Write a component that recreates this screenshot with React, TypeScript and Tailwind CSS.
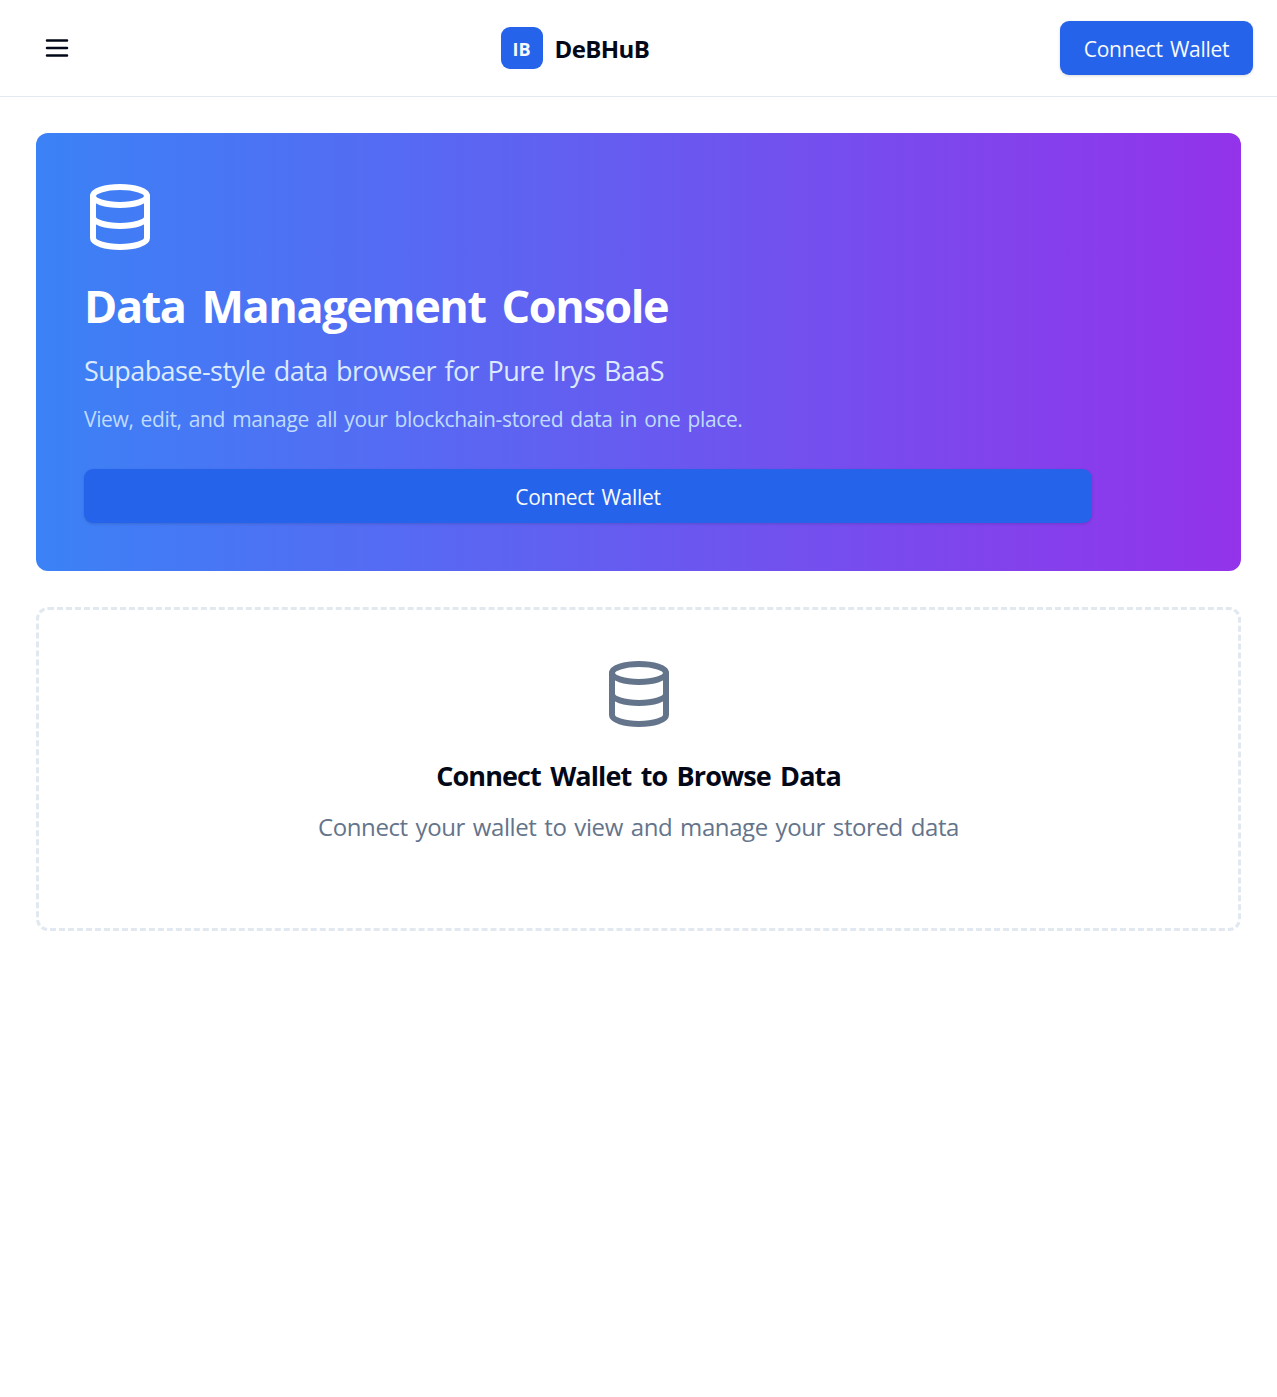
import { Database } from "lucide-react";

function MenuIcon() {
  return (
    <svg width="30" height="30" viewBox="0 0 24 24" fill="none" stroke="currentColor" strokeWidth="2" strokeLinecap="round">
      <path d="M4 6h16M4 12h16M4 18h16" />
    </svg>
  );
}

function ConnectButton({ className }: { className: string }) {
  return (
    <button
      className={
        "flex h-[54px] items-center justify-center rounded-[9px] bg-[#2563eb] text-[21px] text-slate-50 shadow-[0_1px_3px_rgba(0,0,0,0.15)] " +
        className
      }
    >
      <span className="pt-[3px] tracking-[-0.28px] whitespace-nowrap [word-spacing:2px]">Connect Wallet</span>
    </button>
  );
}

export default function App() {
  return (
    <div className="min-h-screen bg-white font-['Open_Sans','Noto_Sans',sans-serif] text-[#020817]">
      <header className="flex h-[97px] items-center justify-between border-b border-[#e2e8f0] px-6">
        <button className="flex h-[54px] w-[66px] items-center justify-center">
          <MenuIcon />
        </button>
        <div className="flex items-center gap-3">
          <div className="flex size-[42px] items-center justify-center rounded-[9px] bg-[#2563eb] pt-0.5 text-[18px] font-bold text-slate-50">
            IB
          </div>
          <span className="w-[95px] pt-0.5 text-[24px] font-bold tracking-[-0.6px] whitespace-nowrap">DeBHuB</span>
        </div>
        <ConnectButton className="w-[193px]" />
      </header>
      <main className="px-9 pt-9">
        <section className="h-[438px] rounded-xl bg-linear-to-r/srgb from-[#3b82f6] to-[#9333ea] p-12 text-white">
          <Database size={72} strokeWidth={2} />
          <h1 className="mt-6 pb-0.5 text-[45px] leading-[58px] font-bold tracking-[-1.4px] whitespace-nowrap [word-spacing:5.5px]">Data Management Console</h1>
          <p className="mt-3 pt-0.5 text-[27px] leading-[40px] tracking-[-0.56px] whitespace-nowrap text-[#dbeafe] [word-spacing:2px]">Supabase-style data browser for Pure Irys BaaS</p>
          <p className="mt-3 pt-0.5 text-[21px] leading-[28px] tracking-[-0.36px] whitespace-nowrap text-[#bfdbfe] [word-spacing:2px]">View, edit, and manage all your blockchain-stored data in one place.</p>
          <ConnectButton className="mt-9 w-[1008px]" />
        </section>
        <section className="mt-9 flex h-[324px] flex-col items-center rounded-xl border-[3px] border-dashed border-[#e2e8f0] pt-12">
          <Database size={72} strokeWidth={2} className="text-[#64748b]" />
          <h2 className="mt-6 pt-0.5 text-[27px] leading-[40px] font-bold tracking-[-0.9px] whitespace-nowrap [word-spacing:3.2px]">Connect Wallet to Browse Data</h2>
          <p className="mt-3 pt-0.5 text-[24px] leading-[34px] tracking-[-0.4px] whitespace-nowrap text-[#64748b] [word-spacing:2px]">Connect your wallet to view and manage your stored data</p>
        </section>
      </main>
    </div>
  );
}
